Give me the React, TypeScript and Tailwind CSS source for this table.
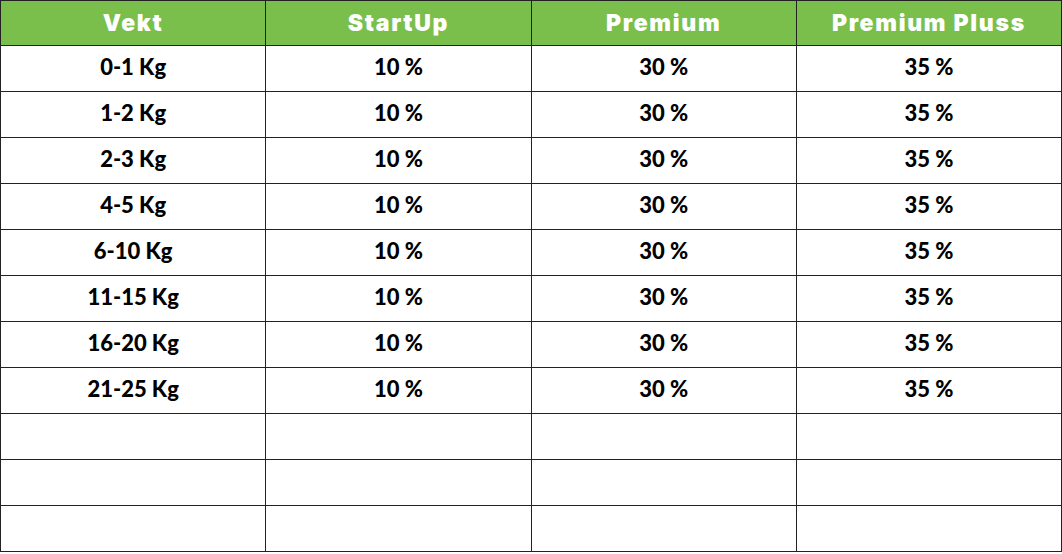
import React from "react";

const rows = [
  ["0-1 Kg", "10 %", "30 %", "35 %"],
  ["1-2 Kg", "10 %", "30 %", "35 %"],
  ["2-3 Kg", "10 %", "30 %", "35 %"],
  ["4-5 Kg", "10 %", "30 %", "35 %"],
  ["6-10 Kg", "10 %", "30 %", "35 %"],
  ["11-15 Kg", "10 %", "30 %", "35 %"],
  ["16-20 Kg", "10 %", "30 %", "35 %"],
  ["21-25 Kg", "10 %", "30 %", "35 %"],
  ["", "", "", ""],
  ["", "", "", ""],
  ["", "", "", ""],
];

const headers = ["Vekt", "StartUp", "Premium", "Premium Pluss"];

export default function App() {
  return (
    <div className="w-[1062px] h-[554px] bg-white">
      <table className="w-[1062px] border-collapse table-fixed">
        <thead>
          <tr className="h-[45px] bg-[#7abf4c]">
            {headers.map((h) => (
              <th
                key={h}
                className="border-[1.5px] border-[#222222] text-white text-[23px] font-black tracking-[1.7px] text-center p-0 pt-[1px] leading-none"
                style={{ fontFamily: "Inter, 'Liberation Sans', sans-serif" }}
              >
                {h}
              </th>
            ))}
          </tr>
        </thead>
        <tbody>
          {rows.map((r, i) => (
            <tr key={i} className="h-[46px]">
              {r.map((c, j) => (
                <td
                  key={j}
                  className="border-[1.5px] border-[#222222] text-center text-black text-[22px] font-black p-0 pb-[4px] leading-none"
                  style={{ fontFamily: "Lato, 'Liberation Sans', sans-serif" }}
                >
                  {c}
                </td>
              ))}
            </tr>
          ))}
        </tbody>
      </table>
    </div>
  );
}
